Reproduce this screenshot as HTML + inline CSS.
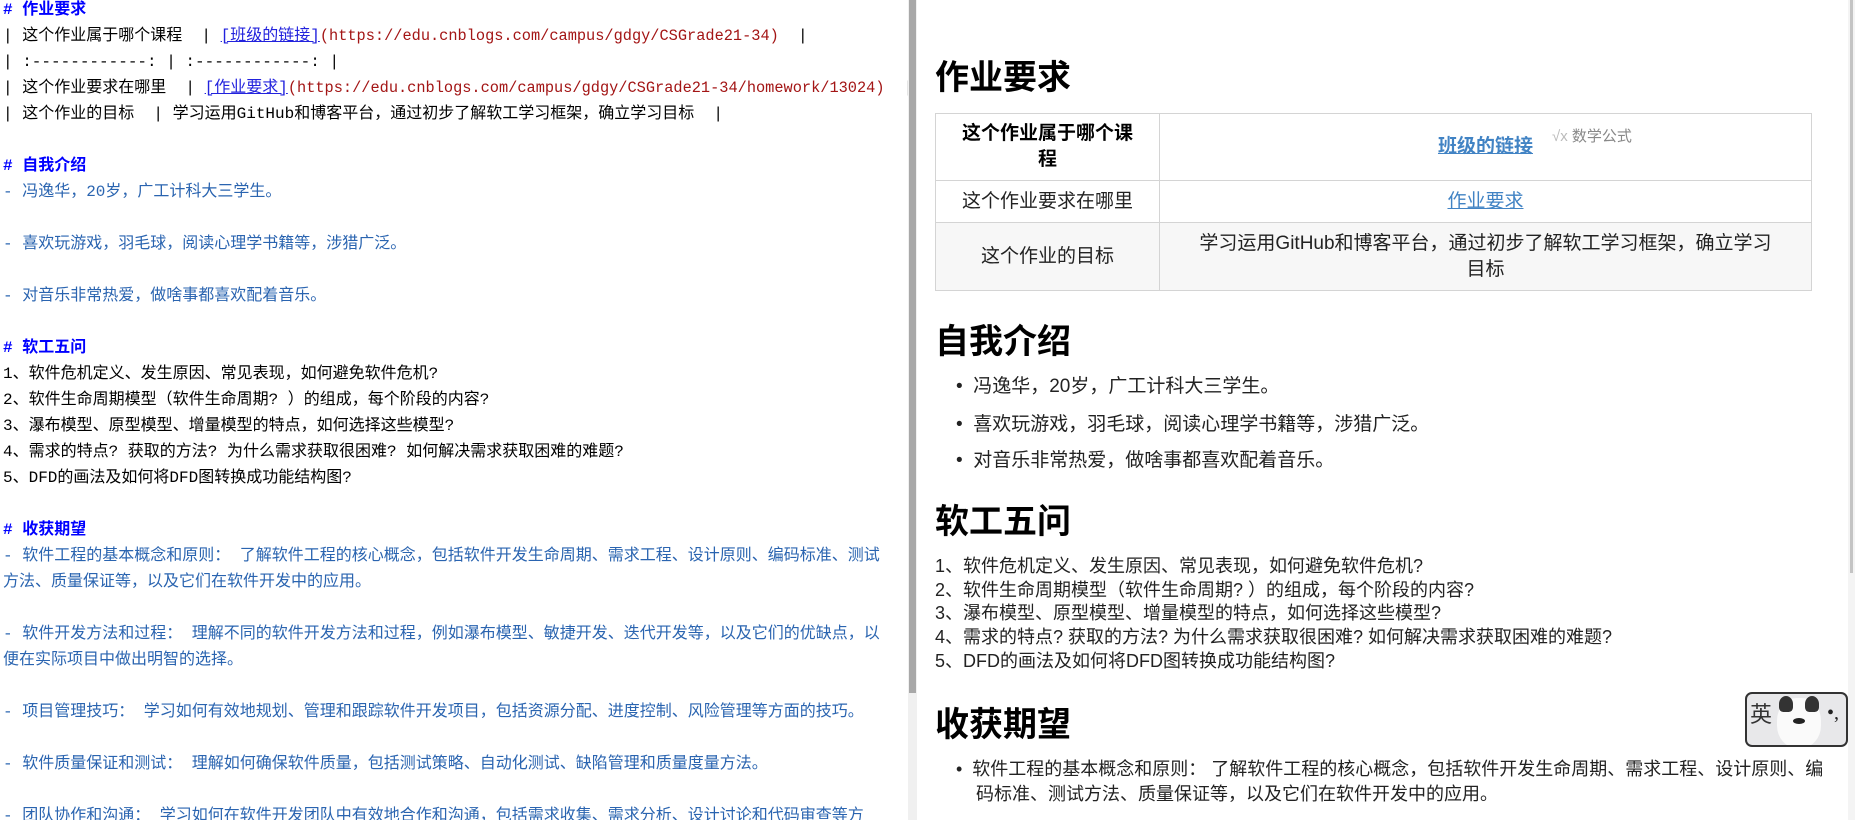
<!DOCTYPE html>
<html><head><meta charset="utf-8"><style>
*{margin:0;padding:0;box-sizing:border-box}
body{width:1855px;height:820px;overflow:hidden;background:#fff;position:relative}
.l{position:absolute;left:0;top:0;width:908px;height:820px;overflow:hidden;font-family:"Liberation Mono","Noto Sans CJK SC",monospace;font-size:16px;color:#000}
.l div{height:26px;line-height:26px;white-space:nowrap;padding-left:3px}
.h{color:#0000ff;font-weight:bold}
.b{color:#2a64b0}
.u{color:#a31515;font-size:15.3px}
.a{color:#2222dd;text-decoration:underline}
.r{position:absolute;left:917px;top:0;width:931px;height:820px;font-family:"Liberation Sans","Noto Sans CJK SC",sans-serif;color:#222;font-size:19px}
.r .x{position:absolute;white-space:nowrap}
.h1{font-size:34px;font-weight:bold;color:#000;line-height:40px}
table{position:absolute;left:18px;top:113px;width:877px;border-collapse:collapse;font-size:19px}
td{border:1px solid #d4d4d4;text-align:center;line-height:26px;padding:0 10px}
a{color:#4183c4;text-decoration:underline}
</style></head><body>
<div class="l"><div style="margin-top:-3.5px"></div>
<div class="h" style="margin-top:-26px"># 作业要求</div>
<div>| 这个作业属于哪个课程 &nbsp;| <span class="a">[班级的链接]</span><span class="u">(https://edu.cnblogs.com/campus/gdgy/CSGrade21-34)</span> &nbsp;|</div>
<div>| :------------: | :------------: |</div>
<div>| 这个作业要求在哪里 &nbsp;| <span class="a">[作业要求]</span><span class="u">(https://edu.cnblogs.com/campus/gdgy/CSGrade21-34/homework/13024)</span> &nbsp;|</div>
<div>| 这个作业的目标 &nbsp;| 学习运用GitHub和博客平台，通过初步了解软工学习框架，确立学习目标 &nbsp;|</div>
<div></div>
<div class="h"># 自我介绍</div>
<div class="b">- 冯逸华，20岁，广工计科大三学生。</div>
<div></div>
<div class="b">- 喜欢玩游戏，羽毛球，阅读心理学书籍等，涉猎广泛。</div>
<div></div>
<div class="b">- 对音乐非常热爱，做啥事都喜欢配着音乐。</div>
<div></div>
<div class="h"># 软工五问</div>
<div>1、软件危机定义、发生原因、常见表现，如何避免软件危机?</div>
<div>2、软件生命周期模型（软件生命周期? ）的组成，每个阶段的内容?</div>
<div>3、瀑布模型、原型模型、增量模型的特点，如何选择这些模型?</div>
<div>4、需求的特点? 获取的方法? 为什么需求获取很困难? 如何解决需求获取困难的难题?</div>
<div>5、DFD的画法及如何将DFD图转换成功能结构图?</div>
<div></div>
<div class="h"># 收获期望</div>
<div class="b">- 软件工程的基本概念和原则： 了解软件工程的核心概念，包括软件开发生命周期、需求工程、设计原则、编码标准、测试</div>
<div class="b">方法、质量保证等，以及它们在软件开发中的应用。</div>
<div></div>
<div class="b">- 软件开发方法和过程： 理解不同的软件开发方法和过程，例如瀑布模型、敏捷开发、迭代开发等，以及它们的优缺点，以</div>
<div class="b">便在实际项目中做出明智的选择。</div>
<div></div>
<div class="b">- 项目管理技巧： 学习如何有效地规划、管理和跟踪软件开发项目，包括资源分配、进度控制、风险管理等方面的技巧。</div>
<div></div>
<div class="b">- 软件质量保证和测试： 理解如何确保软件质量，包括测试策略、自动化测试、缺陷管理和质量度量方法。</div>
<div></div>
<div class="b">- 团队协作和沟通： 学习如何在软件开发团队中有效地合作和沟通，包括需求收集、需求分析、设计讨论和代码审查等方</div>
</div>
<div style="position:absolute;left:908px;top:0;width:9px;height:820px;background:#f0f0f0"></div>
<div style="position:absolute;left:909px;top:0;width:7px;height:693px;background:#a8a8a8"></div>
<div class="r">
<div class="x h1" style="left:18px;top:58px">作业要求</div>
<table>
<tr style="height:67px"><td style="width:224px;font-weight:bold;color:#000">这个作业属于哪个课<br>程</td><td><a style="font-weight:bold">班级的链接</a></td></tr>
<tr style="height:42px"><td>这个作业要求在哪里</td><td><a>作业要求</a></td></tr>
<tr style="height:68px;background:#f7f7f7"><td>这个作业的目标</td><td>学习运用GitHub和博客平台，通过初步了解软工学习框架，确立学习<br>目标</td></tr>
</table>
<div class="x" style="left:635px;top:127px;font-size:15px;color:#888;line-height:20px"><span style="color:#bbb">√x</span> 数学公式</div>
<div class="x h1" style="left:18px;top:322px">自我介绍</div>
<div class="x" style="left:39px;top:374px;line-height:26px">•&nbsp;&nbsp;冯逸华，20岁，广工计科大三学生。</div>
<div class="x" style="left:39px;top:412px;line-height:26px">•&nbsp;&nbsp;喜欢玩游戏，羽毛球，阅读心理学书籍等，涉猎广泛。</div>
<div class="x" style="left:39px;top:448px;line-height:26px">•&nbsp;&nbsp;对音乐非常热爱，做啥事都喜欢配着音乐。</div>
<div class="x h1" style="left:18px;top:502px">软工五问</div>
<div class="x" style="left:18px;top:555px;line-height:23.7px;font-size:18px">1、软件危机定义、发生原因、常见表现，如何避免软件危机?<br>2、软件生命周期模型（软件生命周期? ）的组成，每个阶段的内容?<br>3、瀑布模型、原型模型、增量模型的特点，如何选择这些模型?<br>4、需求的特点? 获取的方法? 为什么需求获取很困难? 如何解决需求获取困难的难题?<br>5、DFD的画法及如何将DFD图转换成功能结构图?</div>
<div class="x h1" style="left:18px;top:705px">收获期望</div>
<div class="x" style="left:39px;top:757px;line-height:25px;font-size:18px">•&nbsp;&nbsp;软件工程的基本概念和原则： 了解软件工程的核心概念，包括软件开发生命周期、需求工程、设计原则、编<br>&nbsp;&nbsp;&nbsp;&nbsp;码标准、测试方法、质量保证等，以及它们在软件开发中的应用。</div>
</div>
<div style="position:absolute;left:1848px;top:0;width:7px;height:820px;background:#f4f4f4"></div>
<div style="position:absolute;left:1850px;top:0;width:3px;height:573px;background:#c4c4c4"></div>
<div style="position:absolute;left:1745px;top:692px;width:103px;height:55px;border:2px solid #333;border-radius:7px;background:#e8e8ea;overflow:hidden">
<div style="position:absolute;left:30px;top:4px;width:44px;height:50px;border-radius:45%;background:#fafafa"></div>
<div style="position:absolute;left:32px;top:2px;width:14px;height:16px;border-radius:50% 50% 30% 30%;background:#333"></div>
<div style="position:absolute;left:58px;top:2px;width:14px;height:16px;border-radius:50% 50% 30% 30%;background:#333"></div>
<div style="position:absolute;left:46px;top:24px;width:12px;height:6px;border-radius:50%;background:#222"></div>
<div style="position:absolute;left:3px;top:6px;font-size:22px;color:#333;font-family:'Noto Sans CJK SC',sans-serif;line-height:26px">英</div>
<div style="position:absolute;left:80px;top:8px;font-size:20px;color:#222;line-height:22px">•,</div>
</div>
</body></html>
